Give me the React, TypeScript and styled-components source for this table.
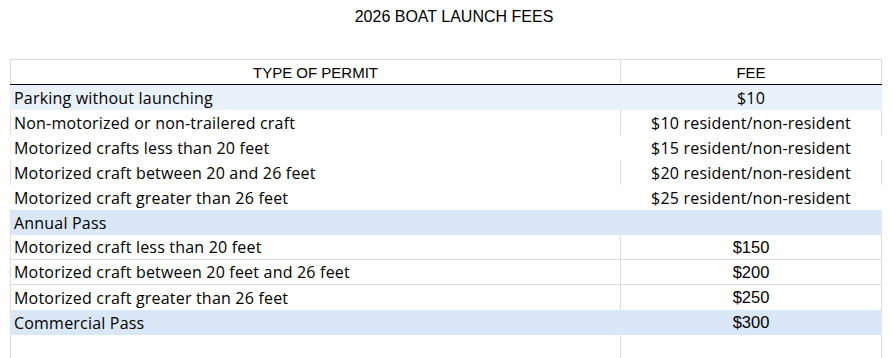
import styled, { createGlobalStyle } from "styled-components";

const GlobalStyle = createGlobalStyle`
  body {
    margin: 0;
    background: #ffffff;
    color: #000000;
  }
`;
const Page = styled.div`
  width: 892px;
  height: 358px;
  overflow: hidden;
  background: #ffffff;
`;
const Title = styled.h1`
  box-sizing: border-box;
  height: 59px;
  margin: 0;
  padding: 8px 0 0 16px;
  text-align: center;
  font-family: "Liberation Sans", Arial, sans-serif;
  font-size: 16px;
  font-weight: 400;
  line-height: 18px;
`;
const Sheet = styled.div`
  margin-left: 10px;
  width: 872px;
`;
const Row = styled.div<{ $bg?: string; $top?: boolean; $bottom?: string }>`
  box-sizing: border-box;
  display: grid;
  grid-template-columns: 610px 262px;
  height: ${(p) => (p.$top ? 26 : 25)}px;
  background: ${(p) => p.$bg || "#ffffff"};
  border-top: ${(p) => (p.$top ? "1px solid #dcdcdc" : "none")};
  border-bottom: ${(p) => (p.$bottom ? `1px solid ${p.$bottom}` : "none")};
`;
const Cell = styled.div<{ $lines?: boolean; $last?: boolean; $center?: boolean; $head?: boolean; $arial?: boolean }>`
  box-sizing: border-box;
  display: flex;
  align-items: center;
  justify-content: ${(p) => (p.$center ? "center" : "flex-start")};
  padding: 0 0 0 ${(p) => (p.$center ? 0 : 3)}px;
  border-left: 1px solid ${(p) => (p.$lines ? "#dcdcdc" : "transparent")};
  border-right: ${(p) => (p.$last ? `1px solid ${p.$lines ? "#dcdcdc" : "transparent"}` : "none")};
  font-family: ${(p) =>
    p.$head || p.$arial ? '"Liberation Sans", Arial, sans-serif' : '"Open Sans", "Noto Sans", sans-serif'};
  font-size: ${(p) => (p.$head ? 15 : p.$arial ? 16.5 : 16)}px;
  letter-spacing: ${(p) => (p.$head || p.$arial ? 0 : 0.2)}px;
  white-space: nowrap;
`;

type Line = {
  name: string;
  fee: string;
  bg?: string;
  lines?: boolean;
  bottom?: string;
  arial?: boolean;
};

const LIGHT = "#e9f1fa";
const BAND = "#dae7f6";
const GRID = "#dcdcdc";

const rows: Line[] = [
  { name: "Parking without launching", fee: "$10", bg: LIGHT },
  { name: "Non-motorized or non-trailered craft", fee: "$10 resident/non-resident", lines: true },
  { name: "Motorized crafts less than 20 feet", fee: "$15 resident/non-resident" },
  { name: "Motorized craft between 20 and 26 feet", fee: "$20 resident/non-resident", lines: true },
  { name: "Motorized craft greater than 26 feet", fee: "$25 resident/non-resident" },
  { name: "Annual Pass", fee: "", bg: BAND },
  { name: "Motorized craft less than 20 feet", fee: "$150", lines: true, bottom: GRID, arial: true },
  { name: "Motorized craft between 20 feet and 26 feet", fee: "$200", lines: true, bottom: GRID, arial: true },
  { name: "Motorized craft greater than 26 feet", fee: "$250", lines: true, arial: true },
  { name: "Commercial Pass", fee: "$300", bg: BAND, arial: true },
  { name: "", fee: "", lines: true },
];

export default function App() {
  return (
    <Page>
      <GlobalStyle />
      <Title>2026 BOAT LAUNCH FEES</Title>
      <Sheet>
        <Row $top $bottom="#000000">
          <Cell $lines $center $head>TYPE OF PERMIT</Cell>
          <Cell $lines $last $center $head>FEE</Cell>
        </Row>
        {rows.map((r, i) => (
          <Row key={i} $bg={r.bg} $bottom={r.bottom}>
            <Cell $lines={r.lines}>{r.name}</Cell>
            <Cell $lines={r.lines} $last $center $arial={r.arial}>
              {r.fee}
            </Cell>
          </Row>
        ))}
      </Sheet>
    </Page>
  );
}
